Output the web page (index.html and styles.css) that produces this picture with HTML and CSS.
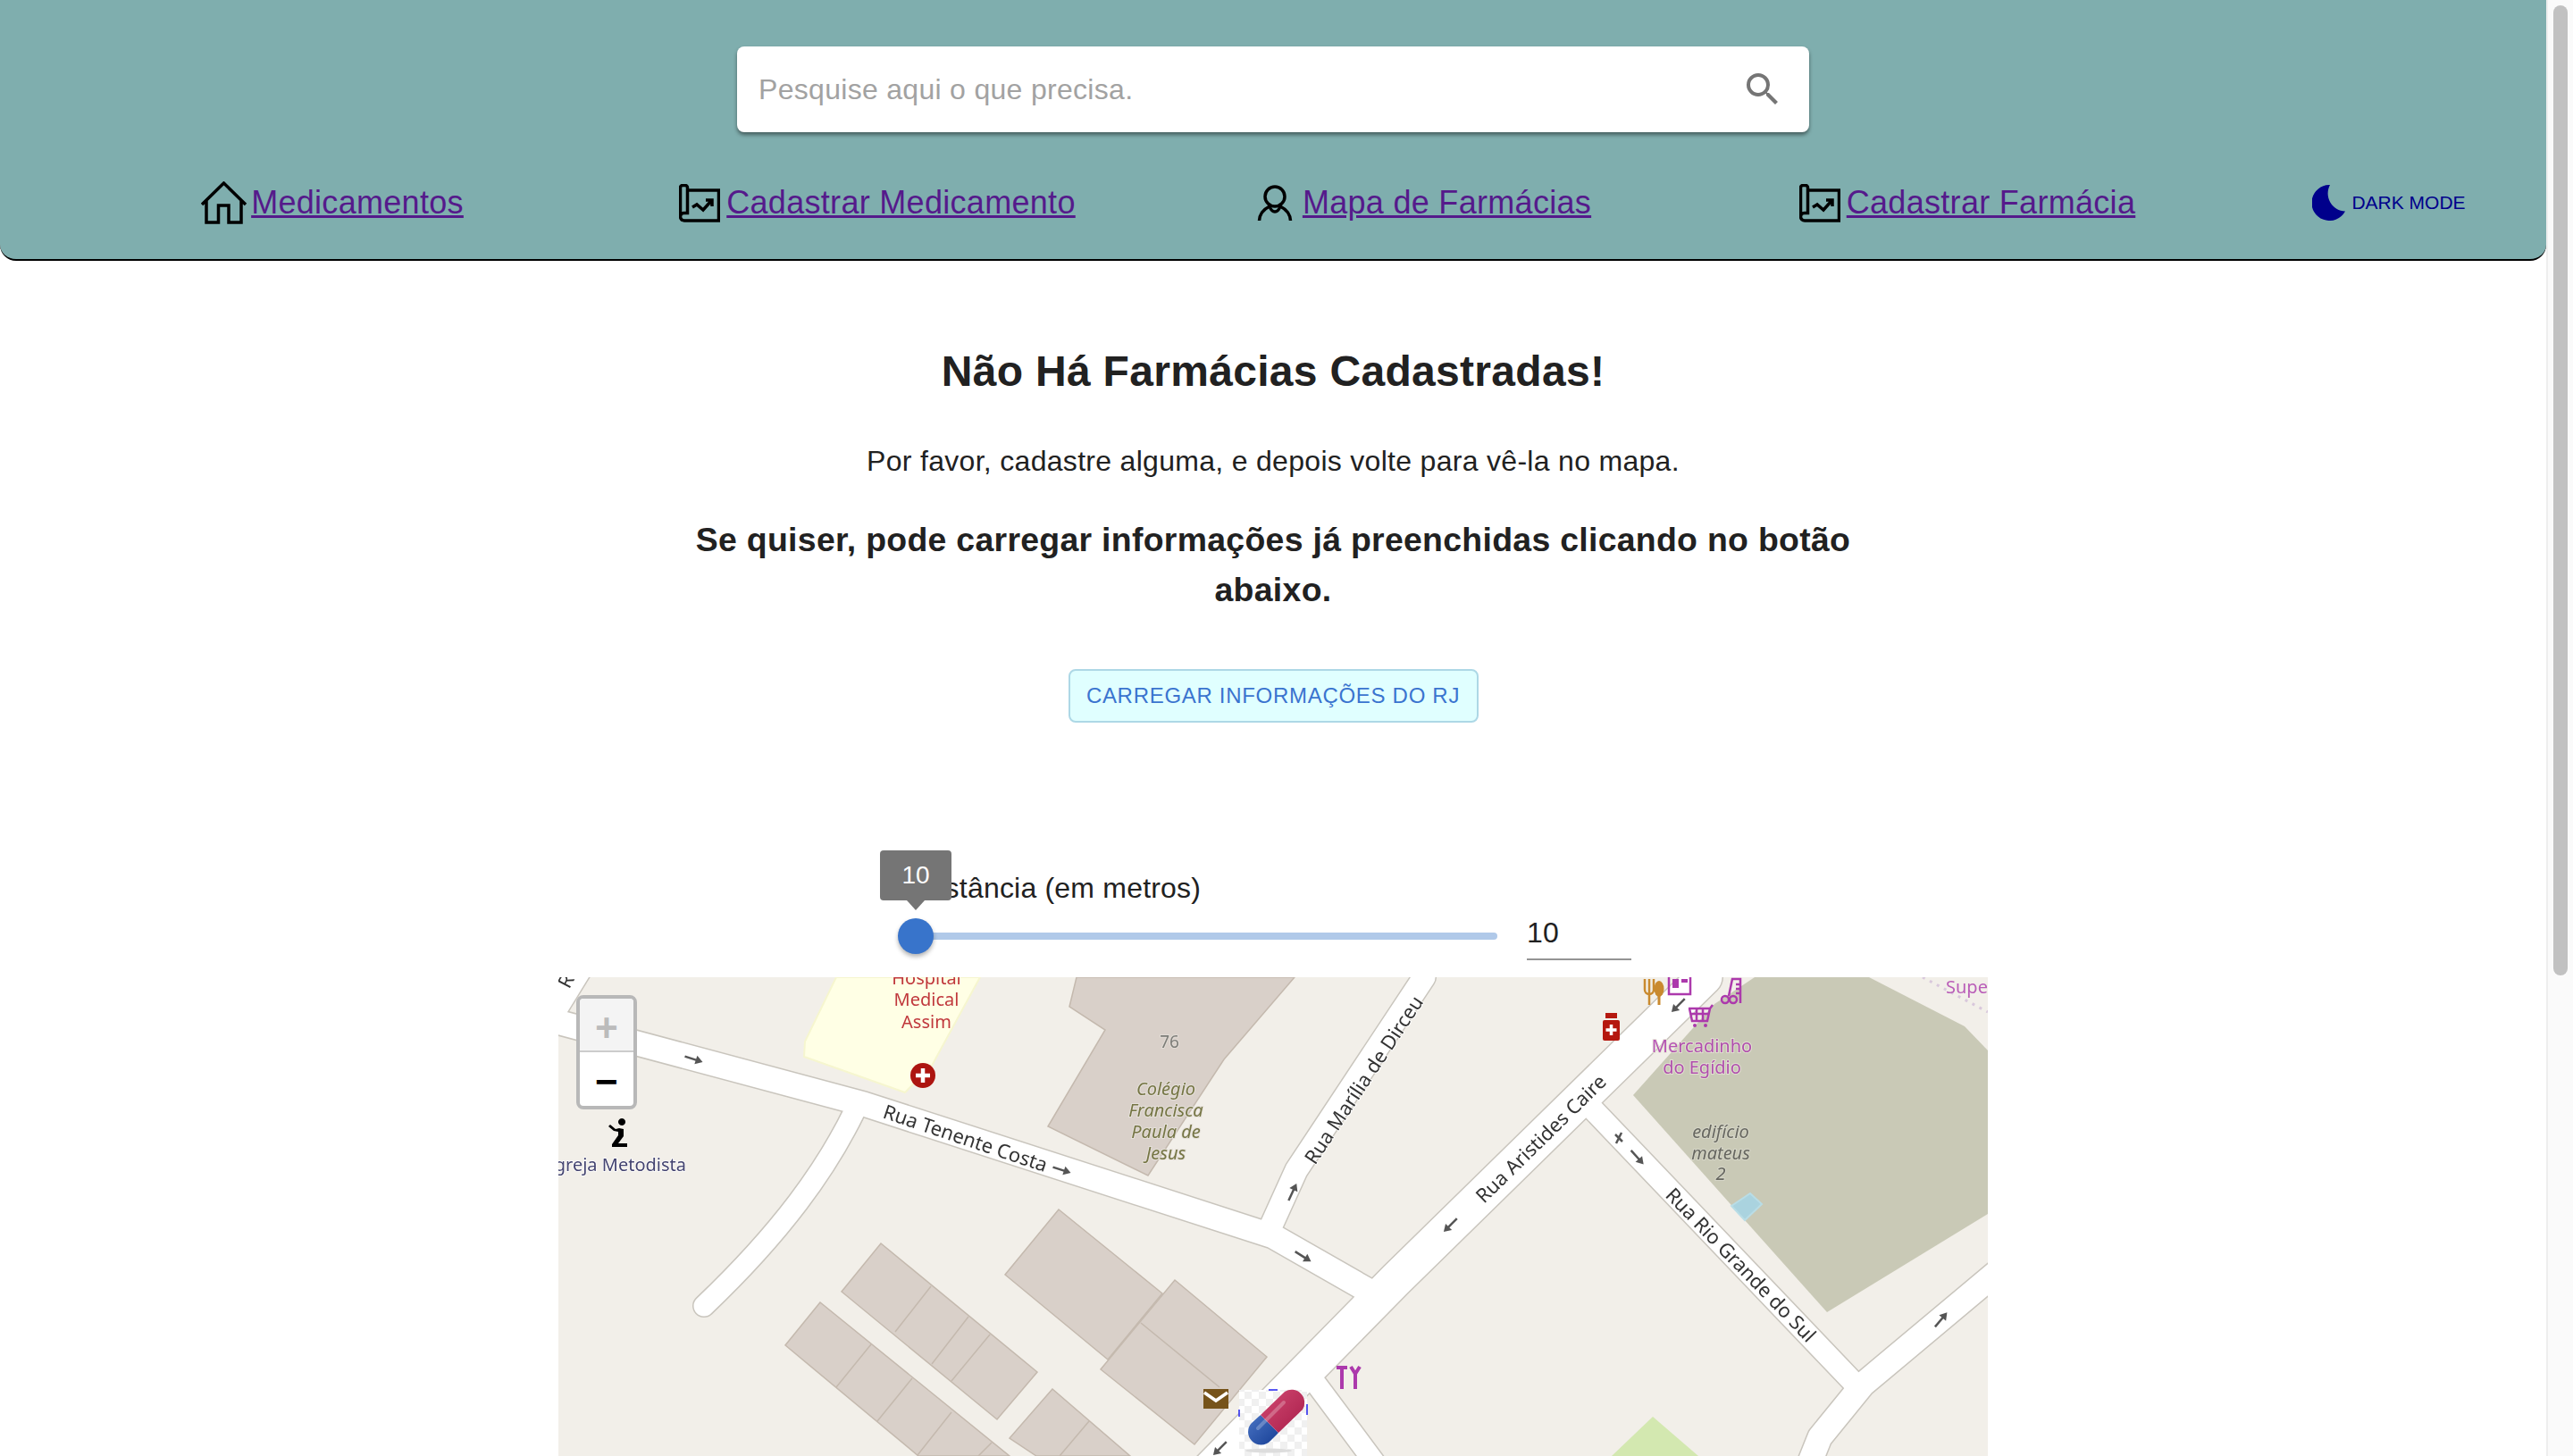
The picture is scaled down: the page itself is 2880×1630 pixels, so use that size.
FILE: index.html
```html
<!DOCTYPE html>
<html lang="pt-br">
<head>
    <meta charset="UTF-8">
    <meta name="viewport" content="width=device-width, initial-scale=1.0">
    <title>Mapa de Farmácias</title>
    <link rel="stylesheet" href="styles.css">
</head>
<body>
    <div class="pagina">
        <header class="topo">
            <div class="busca">
                <span class="busca-texto">Pesquise aqui o que precisa.</span>
                <svg class="busca-icone" viewBox="0 0 24 24"><path d="M15.5 14h-.79l-.28-.27A6.47 6.47 0 0 0 16 9.5 6.5 6.5 0 1 0 9.5 16c1.61 0 3.09-.59 4.23-1.57l.27.28v.79l5 4.99L20.49 19l-4.99-5zm-6 0C7.01 14 5 11.99 5 9.5S7.01 5 9.5 5 14 7.01 14 9.5 11.99 14 9.5 14z"/></svg>
            </div>
            <nav class="menu">
                <div class="menu-item">
                    <svg class="ic-casa" viewBox="0 0 52 48"><path d="M1 26 25.5 2 50 26M6 22V46H19.5V27H31V46H45V22"/></svg>
                    <a href="#">Medicamentos</a>
                </div>
                <div class="menu-item">
                    <svg class="ic-doc" viewBox="0 0 46 43"><path d="M9.5 7H44.5V41H6A4.5 4.5 0 0 1 1.5 36.5V4A2.5 2.5 0 0 1 4 1.5H7A2.5 2.5 0 0 1 9.5 4V32.5H5.5A4 4 0 0 0 1.5 36.5"/><path d="M15 26 20 23 27 29 36 19M30 18H37V25"/></svg>
                    <a href="#">Cadastrar Medicamento</a>
                </div>
                <div class="menu-item item-mapa">
                    <svg class="ic-user" viewBox="0 0 40 42"><circle cx="20" cy="14" r="11"/><path d="M2.5 41C3 33 8 28 14 25 17 33 23 33 26 25 32 28 37 33 37.5 41"/></svg>
                    <a href="#">Mapa de Farmácias</a>
                </div>
                <div class="menu-item">
                    <svg class="ic-doc" viewBox="0 0 46 43"><path d="M9.5 7H44.5V41H6A4.5 4.5 0 0 1 1.5 36.5V4A2.5 2.5 0 0 1 4 1.5H7A2.5 2.5 0 0 1 9.5 4V32.5H5.5A4 4 0 0 0 1.5 36.5"/><path d="M15 26 20 23 27 29 36 19M30 18H37V25"/></svg>
                    <a href="#">Cadastrar Farmácia</a>
                </div>
                <div class="menu-item modo">
                    <svg class="ic-lua" viewBox="0 0 38 40"><path d="M20 0A20 20 0 1 0 37 29.5 20 20 0 0 1 20 0Z"/></svg>
                    <span>DARK MODE</span>
                </div>
            </nav>
        </header>

        <main class="conteudo">
            <h1>Não Há Farmácias Cadastradas!</h1>
            <p class="aviso">Por favor, cadastre alguma, e depois volte para vê-la no mapa.</p>
            <h2>Se quiser, pode carregar informações já preenchidas clicando no botão abaixo.</h2>
            <button class="carregar">Carregar informações do RJ</button>

            <div class="distancia">
                <label>Distância (em metros)</label>
                <div class="linha-slider">
                    <div class="slider">
                        <div class="slider-trilho"></div>
                        <div class="slider-bola"></div>
                        <div class="slider-dica">10</div>
                    </div>
                    <div class="slider-valor">10</div>
                </div>
            </div>

            <div class="mapa">
                <svg class="mapa-svg" viewBox="0 0 1600 536">
                    <defs>
                        <pattern id="xadrez" width="16" height="16" patternUnits="userSpaceOnUse">
                            <rect width="16" height="16" fill="#fff"/>
                            <rect width="8" height="8" fill="#f0f0f0"/>
                            <rect x="8" y="8" width="8" height="8" fill="#f0f0f0"/>
                        </pattern>
                        <linearGradient id="azul" x1="0" y1="0" x2="1" y2="1">
                            <stop offset="0" stop-color="#4a74c4"/>
                            <stop offset="1" stop-color="#173f95"/>
                        </linearGradient>
                        <linearGradient id="vermelho" x1="0" y1="0" x2="1" y2="1">
                            <stop offset="0" stop-color="#d24a72"/>
                            <stop offset="1" stop-color="#a81d4a"/>
                        </linearGradient>
                        <g id="seta">
                            <path d="M-11 0H3"/>
                            <polygon class="seta-ponta" points="2,-5 10,0 2,5"/>
                        </g>
                    </defs>

                    <rect width="1600" height="536" fill="#f2efe9"/>

                    <!-- areas -->
                    <polygon class="area-hospital" points="311,0 276,72 275,89 388,129 418,99 472,0"/>
                    <polygon class="area-terreno" points="1203,132 1294,30 1339,0 1467,0 1574,55 1600,82 1600,265 1420,375"/>
                    <polygon class="area-agua" points="1313,256 1334,242 1347,254 1328,272"/>
                    <polygon class="area-verde" points="1225,492 1179,536 1276,536"/>
                    <path class="trilha" d="M1527 0 1600 39"/>

                    <!-- predios -->
                    <g class="predio">
                        <polygon points="580,0 572,33 612,59 548,167 660,222 745,92 824,0"/>
                        <polygon points="361,298 536,442 491,495 317,352"/>
                        <path d="M417 346 377 397M459 380 418 433M483 400 440 452"/>
                        <polygon points="293,364 254,412 403,536 505,536"/>
                        <path d="M350 411 311 459M396 449 357 497M440 487 402 535M485 521 470 536"/>
                        <polygon points="560,260 676,354 615,428 500,333"/>
                        <polygon points="690,339 793,425 712,523 607,439"/>
                        <path d="M652 387 740 459"/>
                        <polygon points="553,461 505,516 535,536 640,536"/>
                        <path d="M594 497 561 536"/>
                    </g>

                    <!-- ruas: borda e depois miolo -->
                    <g class="rua-borda">
                        <path d="M-20 45 342 142 800 290 905 350" stroke-width="30"/>
                        <path d="M332 149C300 215 250 285 163 368" stroke-width="26"/>
                        <path d="M969 0 826 216 797 280" stroke-width="28"/>
                        <path d="M1283 0 937 339 720 560" stroke-width="42"/>
                        <path d="M848 455 915 545" stroke-width="26"/>
                        <path d="M1157 147 1450 454" stroke-width="27"/>
                        <path d="M1620 322 1460 456 1412 515 1400 545" stroke-width="30"/>
                        <path d="M25 -15 -15 50" stroke-width="34"/>
                    </g>
                    <g class="rua-miolo">
                        <path d="M-20 45 342 142 800 290 905 350" stroke-width="27"/>
                        <path d="M332 149C300 215 250 285 163 368" stroke-width="23"/>
                        <path d="M969 0 826 216 797 280" stroke-width="25"/>
                        <path d="M1283 0 937 339 720 560" stroke-width="39"/>
                        <path d="M848 455 915 545" stroke-width="23"/>
                        <path d="M1157 147 1450 454" stroke-width="24"/>
                        <path d="M1620 322 1460 456 1412 515 1400 545" stroke-width="27"/>
                        <path d="M25 -15 -15 50" stroke-width="31"/>
                    </g>

                    <!-- setas de mao unica -->
                    <g class="setas">
                        <use href="#seta" transform="translate(152 92) rotate(18)"/>
                        <use href="#seta" transform="translate(564 216) rotate(18)"/>
                        <use href="#seta" transform="translate(834 313) rotate(32)"/>
                        <use href="#seta" transform="translate(1253 32) rotate(135)"/>
                        <use href="#seta" transform="translate(998 278) rotate(135)"/>
                        <use href="#seta" transform="translate(822 240) rotate(-65)"/>
                        <use href="#seta" transform="translate(1208 202) rotate(48)"/>
                        <use href="#seta" transform="translate(1548 383) rotate(-50)"/>
                        <use href="#seta" transform="translate(740 528) rotate(135)"/>
                        <path d="M1183 176 1191 184M1190 174 1184 186"/>
                    </g>

                    <!-- nomes -->
                    <g class="nome-rua">
                        <text x="362" y="157" transform="rotate(18.6 362 157)">Rua Tenente Costa</text>
                        <text x="847" y="211" transform="rotate(-56.4 847 211)">Rua Marília de Dirceu</text>
                        <text x="1036" y="254" transform="rotate(-44.4 1036 254)">Rua Aristides Caire</text>
                        <text x="1238" y="245" transform="rotate(45.9 1238 245)">Rua Rio Grande do Sul</text>
                        <text x="12" y="14" transform="rotate(-62 12 14)">Ru</text>
                    </g>
                    <g class="nome-centro">
                        <g class="nome-hospital">
                            <text x="412" y="8">Hospital</text>
                            <text x="412" y="32">Medical</text>
                            <text x="412" y="57">Assim</text>
                        </g>
                        <text class="nome-numero" x="684" y="79">76</text>
                        <g class="nome-escola">
                            <text x="680" y="132">Colégio</text>
                            <text x="680" y="156">Francisca</text>
                            <text x="680" y="180">Paula de</text>
                            <text x="680" y="204">Jesus</text>
                        </g>
                        <g class="nome-loja">
                            <text x="1280" y="84">Mercadinho</text>
                            <text x="1280" y="108">do Egídio</text>
                        </g>
                        <g class="nome-edificio">
                            <text x="1301" y="180">edifício</text>
                            <text x="1301" y="204">mateus</text>
                            <text x="1301" y="227">2</text>
                        </g>
                    </g>
                    <text class="nome-igreja" x="143" y="217" text-anchor="end">Igreja Metodista</text>
                    <text class="nome-super" x="1553" y="18">Super</text>

                    <!-- icones de lugares -->
                    <circle cx="408" cy="110" r="14" fill="#ad1510"/>
                    <path d="M408 102V118M400 110H416" stroke="#fff" stroke-width="4.5"/>

                    <path class="poi-preto" d="M71 158a4 4 0 1 0 .1 0zM58 165l6 5 4-1 5 1v8l-6 8h10v4H60v-3l7-10v-4l-5-1-6-5z"/>

                    <g fill="#b5180f">
                        <rect x="1172" y="40" width="13" height="6"/>
                        <rect x="1169" y="48" width="19" height="23" rx="2"/>
                    </g>
                    <path d="M1178.5 53V65M1172.5 59H1184.5" stroke="#fff" stroke-width="3.5"/>

                    <g fill="none" stroke="#c98a2f" stroke-width="2.5">
                        <path d="M1216 2V14A5 5 0 0 0 1226 14V2M1221 2V31"/>
                    </g>
                    <ellipse cx="1232" cy="13" rx="5.5" ry="9" fill="#c98a2f"/>
                    <rect x="1230.5" y="14" width="3" height="17" fill="#c98a2f"/>

                    <g fill="none" stroke="#ac39ac" stroke-width="2.5">
                        <rect x="1243" y="-6" width="24" height="25"/>
                    </g>
                    <rect x="1247" y="2" width="7" height="10" fill="#ac39ac"/>
                    <rect x="1257" y="2" width="7" height="4" fill="#ac39ac"/>

                    <g fill="none" stroke="#ac39ac" stroke-width="2.5">
                        <circle cx="1306" cy="25" r="4"/>
                        <circle cx="1315" cy="25" r="4"/>
                        <path d="M1310 21 1314 2H1323V29M1318 8H1323M1318 13H1323M1318 18H1323"/>
                    </g>

                    <g fill="none" stroke="#ac39ac" stroke-width="2.5">
                        <path d="M1265 35H1289L1292 31M1266 35 1269 49H1286L1289 35M1267 41H1288M1274 35V49M1281 35V49"/>
                    </g>
                    <circle cx="1272" cy="54" r="2" fill="#ac39ac"/>
                    <circle cx="1284" cy="54" r="2" fill="#ac39ac"/>

                    <path class="poi-garfo" d="M871 437H883M877 437V461M887 436 892 444 897 436M892 444V461"/>

                    <rect x="722" y="461" width="28" height="22" fill="#76531a"/>
                    <path d="M723 465 736 474 749 465" fill="none" stroke="#fff" stroke-width="3.5"/>

                    <!-- marcador da capsula -->
                    <g class="capsula">
                        <rect x="762" y="462" width="76" height="74" fill="url(#xadrez)"/>
                        <path d="M762 484V492M838 478V490M795 462H805" stroke="#2222ee" stroke-width="1.5"/>
                        <ellipse cx="795" cy="530" rx="26" ry="2.5" fill="#ddd"/>
                        <path d="M786 490 806 510 797 519A14.5 14.5 0 0 1 776 499Z" fill="url(#azul)"/>
                        <path d="M786 490 813 464A14.5 14.5 0 0 1 833 484L806 510Z" fill="url(#vermelho)"/>
                        <path d="M783 505 812 476" stroke="#fff" stroke-opacity=".25" stroke-width="4" stroke-linecap="round"/>
                    </g>
                </svg>

                <div class="zoom">
                    <div class="zoom-botao zoom-off">+</div>
                    <div class="zoom-botao">−</div>
                </div>
            </div>
        </main>
    </div>

    <div class="barra-rolagem">
        <div class="barra-pegador"></div>
    </div>
</body>
</html>
```

FILE: styles.css
```css
html, body {
    height: 100%;
    margin: 0;
    overflow: hidden;
}
body {
    display: flex;
    font-family: "Liberation Sans", Arial, sans-serif;
    background-color: #fff;
    color: #212121;
}
.pagina {
    width: 2850px;
    flex: none;
}
.barra-rolagem {
    flex: 1;
    background-color: #fafafa;
    border-left: 2px solid #eeeeee;
    padding: 6px 6px 0 6px;
}
.barra-pegador {
    height: 1086px;
    border-radius: 8px;
    background-color: #c1c1c1;
}

.topo {
    height: 290px;
    background-color: #7faeae;
    border-bottom: 2px solid #000;
    border-radius: 0 0 18px 18px;
    display: flex;
    flex-direction: column;
}
.busca {
    width: 1200px;
    height: 96px;
    margin: 52px auto 0;
    padding: 0 28px 0 24px;
    box-sizing: border-box;
    background-color: #fff;
    border-radius: 8px;
    box-shadow: 0 3px 4px rgba(0, 0, 0, 0.45);
    display: flex;
    align-items: center;
    justify-content: space-between;
}
.busca-texto {
    font-size: 32px;
    letter-spacing: 0.3px;
    color: #a2a2a2;
}
.busca-icone {
    width: 48px;
    height: 48px;
    fill: #757575;
}

.menu {
    display: grid;
    grid-template-columns: repeat(4, 610px) 334px;
    padding-left: 67px;
    margin-top: 51px;
}
.menu-item {
    display: flex;
    align-items: center;
    justify-content: center;
    height: 56px;
    font-size: 36px;
    letter-spacing: 0.3px;
}
.item-mapa {
    padding-left: 4px;
}
.menu-item a {
    color: #551a8b;
    text-decoration: underline;
}
.menu-item svg {
    flex: none;
}
.menu-item svg path, .menu-item svg circle {
    fill: none;
    stroke: #000;
    stroke-width: 3.5;
}
.ic-casa {
    width: 52px;
    height: 48px;
    margin-right: 4px;
}
.ic-doc {
    width: 46px;
    height: 43px;
    margin-right: 7px;
}
.ic-user {
    width: 40px;
    height: 42px;
    margin-right: 11px;
}
.menu-item .ic-lua path {
    fill: #00008b;
    stroke: none;
}
.ic-lua {
    width: 38px;
    height: 40px;
    margin-right: 6px;
}
.modo span {
    font-size: 21px;
    letter-spacing: 0;
    color: #00008b;
}

.conteudo {
    display: flex;
    flex-direction: column;
    align-items: center;
    text-align: center;
}
h1 {
    font-size: 48px;
    line-height: 56px;
    letter-spacing: 0.3px;
    margin: 96px 0 0;
}
.aviso {
    font-size: 32px;
    line-height: 44px;
    letter-spacing: 0.3px;
    margin: 50px 0 0;
}
h2 {
    width: 1360px;
    font-size: 37.4px;
    line-height: 56px;
    letter-spacing: 0.3px;
    margin: 38px 0 0;
}
.carregar {
    width: 459px;
    height: 60px;
    margin-top: 61px;
    padding: 0;
    font-family: inherit;
    font-size: 24px;
    letter-spacing: 0.7px;
    text-transform: uppercase;
    color: #3a74cf;
    background-color: #e0ffff;
    border: 2px solid #add8e6;
    border-radius: 8px;
}

.distancia {
    width: 840px;
    margin-top: 165px;
    text-align: left;
}
.distancia label {
    display: block;
    margin-left: 22px;
    font-size: 32px;
    line-height: 40px;
    letter-spacing: 0.2px;
}
.linha-slider {
    display: flex;
    align-items: flex-start;
    margin-top: 14px;
    height: 54px;
}
.slider {
    position: relative;
    width: 651px;
    height: 40px;
    margin-left: 20px;
}
.slider-trilho {
    margin-top: 16px;
    height: 8px;
    border-radius: 4px;
    background-color: #b0c9e9;
}
.slider-bola {
    position: absolute;
    left: -20px;
    top: 0;
    width: 40px;
    height: 40px;
    border-radius: 50%;
    background-color: #3874cb;
    box-shadow: 0 3px 5px rgba(0, 0, 0, 0.3);
}
.slider-dica {
    position: absolute;
    left: -40px;
    top: -76px;
    width: 80px;
    height: 56px;
    border-radius: 4px;
    background-color: #757575;
    color: #fff;
    font-size: 28px;
    line-height: 56px;
    text-align: center;
}
.slider-dica::after {
    content: "";
    position: absolute;
    left: 30px;
    top: 56px;
    border-left: 10px solid transparent;
    border-right: 10px solid transparent;
    border-top: 11px solid #757575;
}
.slider-valor {
    width: 117px;
    height: 45px;
    margin-left: 33px;
    font-size: 32px;
    line-height: 32px;
    letter-spacing: 0.3px;
    border-bottom: 2px solid #949494;
}

.mapa {
    position: relative;
    width: 1600px;
    height: 536px;
    margin-top: 12px;
    overflow: hidden;
}
.mapa-svg {
    display: block;
    width: 1600px;
    height: 536px;
    filter: blur(0.6px);
    font-family: "Noto Sans", sans-serif;
}
.area-hospital {
    fill: #ffffe5;
    stroke: #f6f6cf;
    stroke-width: 2;
}
.area-terreno {
    fill: #c9c9b6;
}
.area-agua {
    fill: #aad3df;
    stroke: #b9dde6;
    stroke-width: 2;
}
.area-verde {
    fill: #d3e8b0;
}
.trilha {
    fill: none;
    stroke: #d9c8dc;
    stroke-width: 3;
    stroke-dasharray: 3 6;
}
.predio polygon {
    fill: #d9d0c9;
    stroke: #c4b9ae;
    stroke-width: 1.5;
}
.predio path {
    fill: none;
    stroke: #c4b9ae;
    stroke-width: 1.5;
}
.rua-borda path {
    fill: none;
    stroke: #c9c5bd;
    stroke-linejoin: round;
    stroke-linecap: round;
}
.rua-miolo path {
    fill: none;
    stroke: #fff;
    stroke-linejoin: round;
    stroke-linecap: round;
}
.setas {
    fill: none;
    stroke: #555;
    stroke-width: 2.5;
}
.seta-ponta {
    fill: #555;
    stroke: none;
}
.nome-rua {
    font-size: 22px;
    fill: #333;
    stroke: #fff;
    stroke-width: 2;
    paint-order: stroke;
}
.nome-centro {
    font-size: 20px;
    text-anchor: middle;
    stroke-width: 2;
    paint-order: stroke;
}
.nome-hospital {
    fill: #c0383c;
    stroke: #ffffe5;
}
.nome-numero {
    font-size: 19px;
    fill: #7d7d78;
    stroke: #e2dcd6;
}
.nome-escola {
    font-style: italic;
    fill: #757544;
    stroke: #e5e0da;
}
.nome-loja {
    fill: #ac39ac;
    stroke: #e6e4d6;
    opacity: 0.85;
}
.nome-edificio {
    font-style: italic;
    fill: #676760;
    stroke: #d6d6c8;
}
.nome-igreja {
    font-size: 20px;
    fill: #444470;
    stroke: #fff;
    stroke-width: 1.5;
    paint-order: stroke;
}
.nome-super {
    font-size: 20px;
    fill: #ac39ac;
    opacity: 0.8;
}
.poi-garfo {
    fill: none;
    stroke: #ac39ac;
    stroke-width: 4;
}

.zoom {
    position: absolute;
    left: 20px;
    top: 20px;
    width: 60px;
    border: 4px solid #b8b8b8;
    border-radius: 8px;
    overflow: hidden;
    background-color: #fff;
}
.zoom-botao {
    height: 60px;
    line-height: 72px;
    text-align: center;
    font-family: "Liberation Mono", monospace;
    font-size: 44px;
    font-weight: bold;
    color: #000;
}
.zoom-off {
    height: 58px;
    background-color: #f4f4f4;
    color: #bbb;
    border-bottom: 2px solid #ccc;
}
```
